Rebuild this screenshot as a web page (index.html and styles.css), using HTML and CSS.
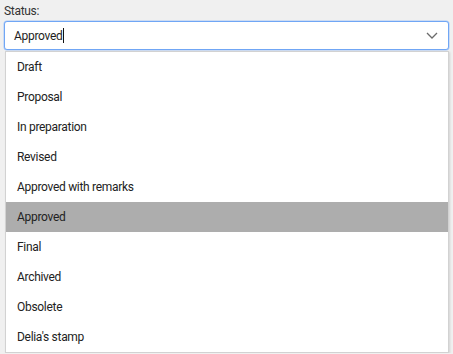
FILE: index.html
```html
<!DOCTYPE html>
<html>
<head>
<meta charset="utf-8">
<link rel="stylesheet" href="styles.css">
</head>
<body>
<div class="field">
  <label class="label">Status:</label>
  <div class="select">
    <span class="value">Approved<span class="caret"></span></span>
    <svg class="chevron" width="12" height="7" viewBox="0 0 12 7"><path d="M1 1l5 5 5-5" fill="none" stroke="#6b6b6b" stroke-width="1.3"/></svg>
  </div>
  <ul class="list">
    <li class="item">Draft</li>
    <li class="item">Proposal</li>
    <li class="item">In preparation</li>
    <li class="item">Revised</li>
    <li class="item">Approved with remarks</li>
    <li class="item active">Approved</li>
    <li class="item">Final</li>
    <li class="item">Archived</li>
    <li class="item">Obsolete</li>
    <li class="item">Delia's stamp</li>
  </ul>
</div>
</body>
</html>
```
FILE: styles.css
```css
html, body {
  margin: 0;
  padding: 0;
  background: #f0f0f0;
  font-family: Roboto, "Liberation Sans", sans-serif;
  font-size: 12px;
  letter-spacing: -0.3px;
  color: #222;
}
.field {
  padding: 3px 4px 0 4px;
  display: flex;
  flex-direction: column;
}
.label {
  height: 18px;
  line-height: 16px;
  color: #333;
}
.select {
  height: 27px;
  border: 1px solid #70a6f5;
  border-radius: 3px;
  background: #fff;
  display: flex;
  align-items: center;
  justify-content: space-between;
  padding: 0 10px 0 9px;
  box-shadow: 0 0 0 0.5px #a9c8f5;
}
.value {
  display: flex;
  align-items: center;
  color: #1e1e1e;
}
.caret {
  display: inline-block;
  width: 1px;
  height: 15px;
  background: #111;
  margin-left: 1px;
}
.chevron {
  display: block;
}
.list {
  list-style: none;
  margin: 1px 0 0 1px;
  padding: 0;
  border: 1px solid #d2d2d2;
  background: #fff;
  box-shadow: 1px 1px 2px rgba(0,0,0,0.12);
}
.item {
  height: 30px;
  line-height: 30px;
  padding-left: 11px;
  color: #222;
}
.item.active {
  background: #adadad;
}
```
